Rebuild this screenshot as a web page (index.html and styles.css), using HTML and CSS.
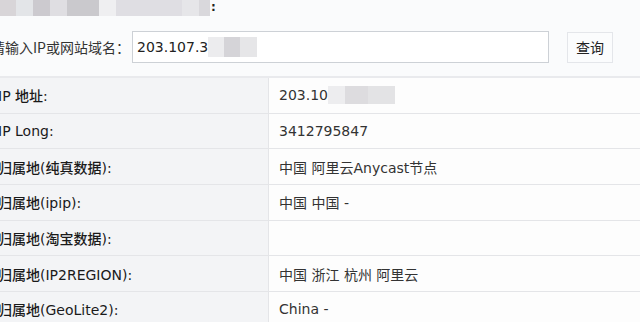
FILE: index.html
```html
<!DOCTYPE html>
<html lang="zh-CN">
<head>
<meta charset="utf-8">
<title>IP 查询</title>
<link rel="stylesheet" href="styles.css">
</head>
<body>
<div class="page">
  <div class="topbar">
    <span class="blur b1"></span><span class="blur b2"></span><span class="blur b3"></span><span class="blur b4"></span><span class="blur b5"></span><span class="blur b6"></span><span class="blur b7"></span><span class="blur b8"></span><span class="blur b9"></span><span class="colon">:</span>
  </div>
  <form class="search">
    <label class="search-label">请输入IP或网站域名：</label>
    <div class="input">
      <span class="input-text">203.107.3</span><span class="blur i1"></span><span class="blur i2"></span><span class="blur i3"></span>
    </div>
    <button type="button" class="btn">查询</button>
  </form>
  <div class="table">
    <div class="row"><div class="key">IP 地址:</div><div class="val">203.10<span class="blur v1"></span><span class="blur v2"></span><span class="blur v3"></span></div></div>
    <div class="row"><div class="key">IP Long:</div><div class="val">3412795847</div></div>
    <div class="row"><div class="key">归属地(纯真数据):</div><div class="val">中国 阿里云Anycast节点</div></div>
    <div class="row"><div class="key">归属地(ipip):</div><div class="val">中国 中国 -</div></div>
    <div class="row"><div class="key">归属地(淘宝数据):</div><div class="val"></div></div>
    <div class="row"><div class="key">归属地(IP2REGION):</div><div class="val">中国 浙江 杭州 阿里云</div></div>
    <div class="row"><div class="key">归属地(GeoLite2):</div><div class="val">China -</div></div>
  </div>
</div>
</body>
</html>
```

FILE: styles.css
```css
html, body {
  margin: 0;
  padding: 0;
}
body {
  width: 640px;
  height: 322px;
  overflow: hidden;
  background: #fafbfc;
  font-family: "DejaVu Sans", "Noto Sans CJK SC", sans-serif;
  font-size: 14px;
  color: #333;
}
.page {
  width: 640px;
}
.topbar {
  display: flex;
  height: 16px;
  align-items: stretch;
}
.blur {
  display: inline-block;
}
.b1 { width: 16px; background: #d8d5d8; }
.b2 { width: 17px; background: #e3e5e8; }
.b3 { width: 17px; background: #cccacf; }
.b4 { width: 17px; background: #dfdee2; }
.b5 { width: 32px; background: #cac9cd; }
.b6 { width: 17px; background: #efeff1; }
.b7 { width: 66px; background: #dfdee3; }
.b8 { width: 17px; background: #e6e6e9; }
.b9 { width: 11px; background: #d9d8dc; }
.colon {
  font-size: 12px;
  line-height: 14px;
  font-weight: bold;
  color: #222;
  padding-left: 1px;
}

.search {
  display: flex;
  align-items: center;
  margin: 15px 0 0 0;
  height: 32px;
}
.search-label {
  margin-left: -9px;
  width: 141px;
  font-family: "Noto Sans CJK SC", sans-serif;
  font-size: 14px;
  color: #333;
  white-space: nowrap;
}
.input {
  box-sizing: border-box;
  width: 417px;
  height: 32px;
  border: 1px solid #cdd1d6;
  background: #ffffff;
  display: flex;
  align-items: center;
  padding-left: 4px;
}
.input-text {
  color: #222;
}
.input .blur {
  height: 20px;
}
.i1 { width: 16px; background: #ececee; }
.i2 { width: 16px; background: #d5d4d8; }
.i3 { width: 17px; background: #e6e6e8; }
.btn {
  box-sizing: border-box;
  margin-left: 18px;
  width: 46px;
  height: 31px;
  border: 1px solid #e4e6ea;
  background: #fbfcfd;
  font-family: "Noto Sans CJK SC", sans-serif;
  font-size: 14px;
  color: #222;
  padding: 0;
}

.table {
  margin-top: 13px;
  border-top: 2px solid #e9eaed;
}
.row {
  display: flex;
  box-sizing: border-box;
  height: 35.7px;
  border-bottom: 1px solid #e4e5e8;
}
.key {
  box-sizing: border-box;
  width: 271px;
  border-right: 1px solid #e4e5e8;
  background: #f3f4f6;
  display: flex;
  align-items: center;
  padding-left: 0;
  margin-left: -2px;
  color: #1a1a1a;
  font-weight: 500;
  white-space: nowrap;
}
.val {
  flex: 1;
  background: #fdfdfd;
  display: flex;
  align-items: center;
  padding-left: 10px;
  color: #333;
  white-space: nowrap;
}
.val .blur {
  height: 18px;
}
.v1 { width: 17px; background: #ededef; }
.v2 { width: 23px; background: #dddcdf; }
.v3 { width: 27px; background: #e3e3e5; }
```
